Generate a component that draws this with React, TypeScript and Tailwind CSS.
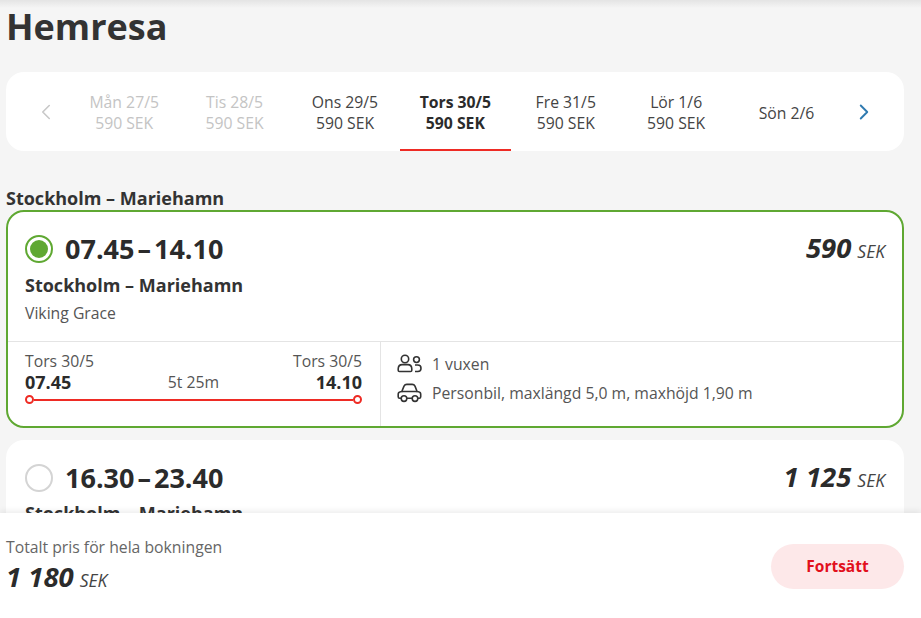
import React from 'react';
import { ChevronLeft, ChevronRight } from 'lucide-react';

const days = [
    { day: 'Mån 27/5', price: '590 SEK', tone: 'muted' },
    { day: 'Tis 28/5', price: '590 SEK', tone: 'muted' },
    { day: 'Ons 29/5', price: '590 SEK', tone: 'normal' },
    { day: 'Tors 30/5', price: '590 SEK', tone: 'active' },
    { day: 'Fre 31/5', price: '590 SEK', tone: 'normal' },
    { day: 'Lör 1/6', price: '590 SEK', tone: 'normal' },
    { day: 'Sön 2/6', price: '', tone: 'normal' },
];

const PeopleIcon = () => (
    <svg width="25" height="20" viewBox="0 0 25 20" fill="none" stroke="#333" strokeWidth="1.6">
        <circle cx="8" cy="5" r="3.7" />
        <path d="M1.2 15c0-3 2-4.4 4-4.4h5.6c2 0 4 1.4 4 4.4v1.2c0 .8-.5 1.3-1.3 1.3h-11c-.8 0-1.3-.5-1.3-1.3z" />
        <circle cx="19.5" cy="5.6" r="2.9" />
        <path d="M18 11h2.8c1.9 0 3.2 1.4 3.2 3.2s-1.3 3.3-3.2 3.3H18" />
    </svg>
);

const CarIcon = () => (
    <svg width="25" height="20" viewBox="0 0 25 20" fill="none" stroke="#333" strokeWidth="1.6">
        <path d="M4.2 15.2H2.6c-.8 0-1.4-.6-1.4-1.4v-2.6c0-1.3 1-2.3 2.3-2.5l1.3-.2L7 3.2C7.6 2 8.6 1.4 9.8 1.4h5.4c1.2 0 2.2.6 2.8 1.8l2.1 5.3 1.3.2c1.3.2 2.3 1.2 2.3 2.5v2.6c0 .8-.6 1.4-1.4 1.4h-1.6" />
        <path d="M9.8 15.2h5.4M5 8.5h15" />
        <circle cx="7" cy="15.6" r="2.8" />
        <circle cx="18" cy="15.6" r="2.8" />
    </svg>
);

const Price = ({ value }: { value: string }) => (
    <div className="italic whitespace-nowrap">
        <span className="text-[27.5px] leading-none font-bold text-[#2b2b2b]">{value}</span>
        <span className="ml-1.5 text-[17.5px] leading-none text-[#444]">SEK</span>
    </div>
);

const Times = ({ from, to }: { from: string; to: string }) => (
    <span className="flex gap-[3px] text-[27px] leading-8 font-bold text-[#2b2b2b]">
        <span>{from}</span>
        <span>–</span>
        <span>{to}</span>
    </span>
);

export default function App() {
    return (
        <div className="relative h-[618px] w-[921px] overflow-hidden bg-[#f5f5f5] font-['Open_Sans',sans-serif] text-[#333]">
            {/* Top shade */}
            <div className="absolute inset-x-0 top-0 h-2 bg-gradient-to-b from-[#e4e4e4] to-[#f5f5f5]"></div>

            <div className="pl-1.5 pr-[17px]">
                <h1 className="pt-[5px] text-[36px] leading-[44px] font-bold text-[#333]">Hemresa</h1>

                {/* Date tabs */}
                <div className="mt-[23px] flex h-[79px] items-stretch rounded-[18px] bg-white">
                    <div className="flex w-[63px] items-center justify-center pl-[17px]">
                        <ChevronLeft className="h-[26px] w-[26px] text-[#c8c8c8]" strokeWidth={1.5} />
                    </div>
                    <div className="flex">
                        {days.map((d) => (
                            <div
                                key={d.day}
                                className={`flex w-[110.4px] flex-col items-center justify-center border-b-2 pt-[5px] text-[15.75px] leading-[21px] ${
                                    d.tone === 'active'
                                        ? 'border-[#ee2b24] font-bold text-[#2b2b2b]'
                                        : d.tone === 'muted'
                                          ? 'border-transparent text-[#c4c4c4]'
                                          : 'border-transparent text-[#444]'
                                }`}
                            >
                                <span>{d.day}</span>
                                {d.price && <span>{d.price}</span>}
                            </div>
                        ))}
                    </div>
                    <div className="flex flex-1 items-center justify-center pr-[18px]">
                        <ChevronRight className="h-[26px] w-[26px] text-[#2f7ab0]" strokeWidth={1.75} />
                    </div>
                </div>

                <h2 className="mt-[35px] text-[18px] leading-6 font-bold text-[#333]">Stockholm – Mariehamn</h2>

                {/* Selected departure */}
                <div className="h-[218px] rounded-[18px] border-2 border-[#5fa832] bg-white">
                    <div className="flex h-[129px] justify-between pt-[21px] pr-[17px] pl-[17px]">
                        <div>
                            <div className="flex items-center gap-[12px]">
                                <div className="flex h-[28px] w-[28px] items-center justify-center rounded-full border-2 border-[#5fa832]">
                                    <div className="h-[18px] w-[18px] rounded-full bg-[#5fa832]"></div>
                                </div>
                                <Times from="07.45" to="14.10" />
                            </div>
                            <div className="mt-[8px] text-[18px] leading-6 font-bold text-[#333]">Stockholm – Mariehamn</div>
                            <div className="mt-[4px] text-[15.75px] leading-6 text-[#555]">Viking Grace</div>
                        </div>
                        <div className="pt-px">
                            <Price value="590" />
                        </div>
                    </div>

                    <div className="flex h-[85px] border-t border-[#e4e4e4]">
                        <div className="w-[373px] border-r border-[#e4e4e4] pt-[9px] pr-[18px] pl-[17px]">
                            <div className="flex justify-between text-[15.75px] leading-[20px] text-[#555]">
                                <span>Tors 30/5</span>
                                <span>Tors 30/5</span>
                            </div>
                            <div className="mt-px flex items-center justify-between leading-5">
                                <span className="text-[18px] font-bold text-[#2b2b2b]">07.45</span>
                                <span className="text-[15.75px] text-[#555]">5t 25m</span>
                                <span className="text-[18px] font-bold text-[#2b2b2b]">14.10</span>
                            </div>
                            {/* Route line */}
                            <div className="mt-[3px] flex items-center">
                                <div className="h-[9px] w-[9px] shrink-0 rounded-full border-2 border-[#ee2b24] bg-white"></div>
                                <div className="h-0.5 flex-1 bg-[#ee2b24]"></div>
                                <div className="h-[9px] w-[9px] shrink-0 rounded-full border-2 border-[#ee2b24] bg-white"></div>
                            </div>
                        </div>
                        <div className="flex flex-col gap-[9px] pt-[12px] pl-[16px] text-[15.75px] leading-5 text-[#555]">
                            <div className="flex items-center gap-[10px]">
                                <PeopleIcon />
                                <span>1 vuxen</span>
                            </div>
                            <div className="flex items-center gap-[10px]">
                                <CarIcon />
                                <span>Personbil, maxlängd 5,0 m, maxhöjd 1,90 m</span>
                            </div>
                        </div>
                    </div>
                </div>

                {/* Next departure, runs under the footer */}
                <div className="mt-[12px] h-[218px] rounded-[18px] bg-white">
                    <div className="flex justify-between pt-[22px] pr-[19px] pl-[19px]">
                        <div>
                            <div className="flex items-center gap-[12px]">
                                <div className="h-[28px] w-[28px] rounded-full border-2 border-[#d4d4d4]"></div>
                                <Times from="16.30" to="23.40" />
                            </div>
                            <div className="mt-[7px] text-[18px] leading-6 font-bold text-[#333]">Stockholm – Mariehamn</div>
                        </div>
                        <div className="pt-px">
                            <Price value="1 125" />
                        </div>
                    </div>
                </div>
            </div>

            {/* Footer */}
            <div className="absolute inset-x-0 bottom-0 flex h-[105px] items-start justify-between bg-white pt-[23px] pr-[17px] pl-1.5 shadow-[0_-2px_6px_rgba(0,0,0,0.08)]">
                <div>
                    <div className="text-[15.75px] leading-[22px] text-[#666]">Totalt pris för hela bokningen</div>
                    <div className="mt-[5px]">
                        <Price value="1 180" />
                    </div>
                </div>
                <button className="mt-[8px] h-[45px] w-[133px] rounded-full bg-[#fde8e9] text-[15.5px] font-bold text-[#e2101c]">Fortsätt</button>
            </div>
        </div>
    );
}
